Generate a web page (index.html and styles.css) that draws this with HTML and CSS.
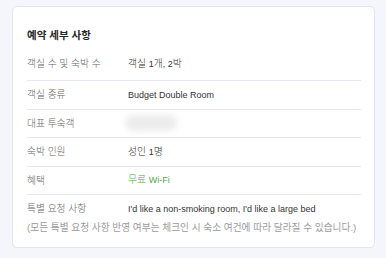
FILE: index.html
```html
<!DOCTYPE html>
<html lang="ko">
<head>
<meta charset="utf-8">
<link rel="stylesheet" href="styles.css">
</head>
<body>
<div class="card">
  <h2 class="title">예약 세부 사항</h2>
  <div class="rows">
    <div class="row"><span class="label">객실 수 및 숙박 수</span><span class="value">객실 <span class="en">1</span>개<span class="en">, 2</span>박</span></div>
    <div class="row"><span class="label">객실 종류</span><span class="value"><span class="en">Budget Double Room</span></span></div>
    <div class="row"><span class="label">대표 투숙객</span><span class="value"><span class="blur"></span></span></div>
    <div class="row"><span class="label">숙박 인원</span><span class="value">성인 <span class="en">1</span>명</span></div>
    <div class="row"><span class="label">혜택</span><span class="value green">무료 <span class="en">Wi-Fi</span></span></div>
    <div class="row last"><span class="label">특별 요청 사항</span><span class="value"><span class="en">I'd like a non-smoking room, I'd like a large bed</span></span></div>
  </div>
  <p class="note">(모든 특별 요청 사항 반영 여부는 체크인 시 숙소 여건에 따라 달라질 수 있습니다.)</p>
</div>
</body>
</html>
```
FILE: styles.css
```css
html, body {
  margin: 0;
  padding: 0;
  background: #f4f6fb;
}
body {
  padding: 6px 11px 10px 12px;
  font-family: "Liberation Sans", Arial, "Noto Sans CJK KR", sans-serif;
}
.card {
  background: #ffffff;
  border: 1px solid #e3e6ee;
  border-radius: 5px;
  height: 242px;
  padding: 0 13px 0 14px;
  box-sizing: border-box;
  overflow: hidden;
}
.title {
  margin: 0;
  padding: 22px 0 0;
  height: 12px;
  font-size: 10.5px;
  line-height: 12px;
  font-weight: bold;
  color: #262626;
}
.rows {
  margin-top: 11px;
}
.row {
  display: flex;
  align-items: center;
  height: 11px;
  font-size: 9.75px;
  line-height: 11px;
  padding: 8px 0 8.5px;
  border-bottom: 1px solid #e6e8ef;
  font-weight: 300;
}
.row:first-child {
  padding-top: 6px;
  padding-bottom: 11px;
}
.row.last {
  border-bottom: none;
  padding-bottom: 0;
}
.label {
  width: 101px;
  flex: none;
  color: #666666;
}
.value {
  color: #2e2e2e;
}
.en {
  font-size: 9px;
  font-weight: 400;
  color: #333;
}
.green,
.green .en {
  color: #4ea844;
}
.blur {
  display: block;
  width: 52px;
  height: 16px;
  margin: -3px 0 -2px -3px;
  background: #ececec;
  border-radius: 8px;
  filter: blur(3px);
}
.note {
  margin: 8px 0 0;
  height: 11px;
  font-size: 9.7px;
  line-height: 11px;
  color: #9a9a9a;
}
```
